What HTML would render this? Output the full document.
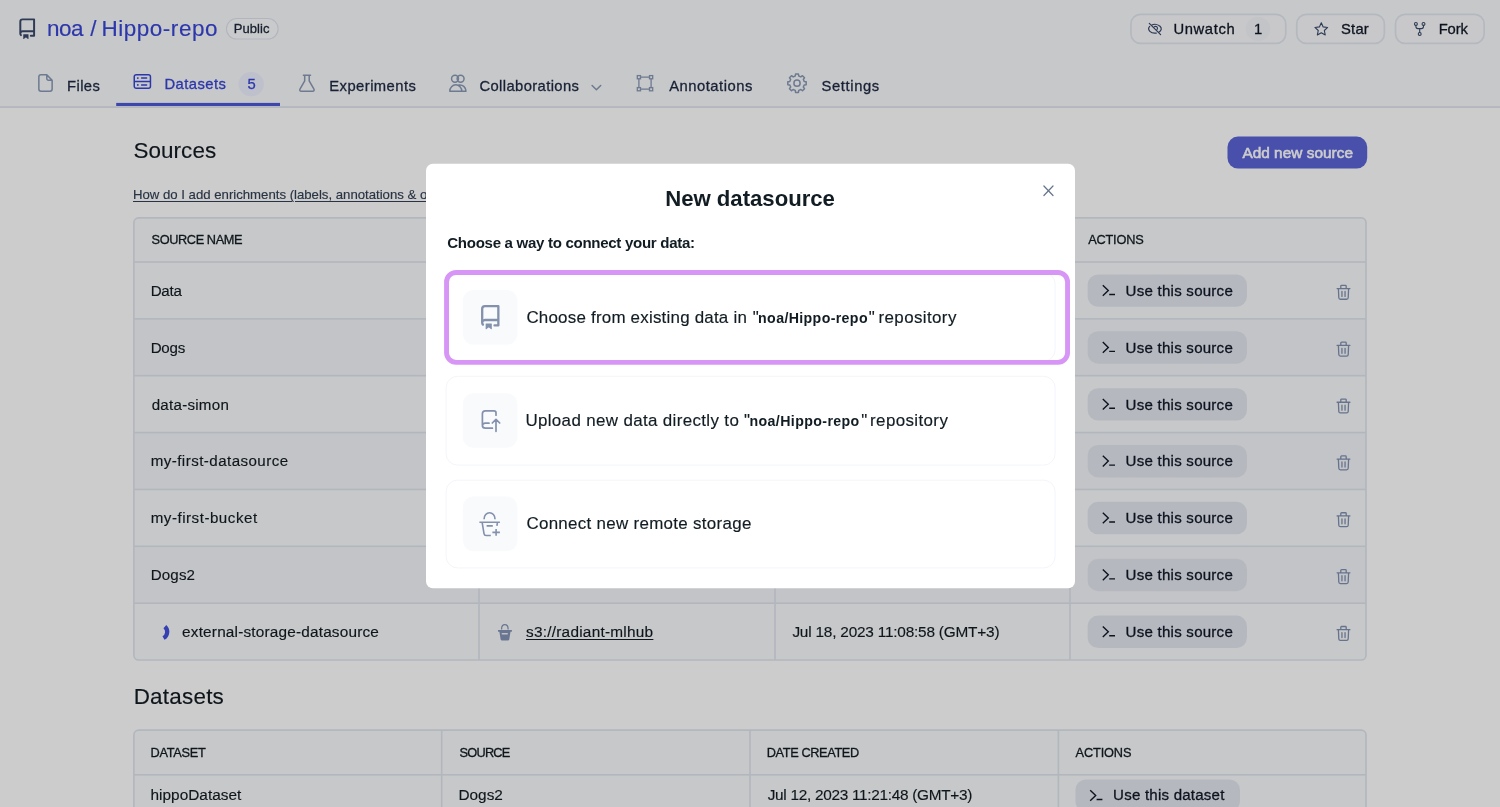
<!DOCTYPE html>
<html lang="en"><head><meta charset="utf-8"><title>noa/Hippo-repo - Datasets</title>
<style>
html,body{margin:0;padding:0;}
body{width:1500px;height:807px;overflow:hidden;position:relative;background:#fff;font-family:"Liberation Sans", sans-serif;}
.t{position:absolute;white-space:pre;font-family:"Liberation Sans", sans-serif;}
.a{position:absolute;box-sizing:border-box;}
svg{position:absolute;overflow:visible;}
</style></head><body>
<div class="a" id="page" style="left:0;top:0;width:1500px;height:807px;overflow:hidden;will-change:transform;">
<svg width="1500" height="807" viewBox="0 0 1500 807" style="left:0;top:0"><rect x="0.00" y="0.00" width="1500.00" height="106.40" rx="0.00" fill="#f8fafc" />
<rect x="0.00" y="106.20" width="1500.00" height="1.70" rx="0.00" fill="#dfe5ed" />
<rect x="116.20" y="102.90" width="163.80" height="3.10" rx="0.00" fill="#4e5ad7" />
<rect x="238.60" y="71.90" width="25.30" height="24.40" rx="12.50" fill="#eef1ff" />
<rect x="226.45" y="18.55" width="51.70" height="20.50" rx="10.25" fill="#fcfdfe" stroke="#dfe4ec" stroke-width="1.1" />
<rect x="1130.95" y="14.35" width="154.80" height="29.10" rx="9.65" fill="#fafbfd" stroke="#e2e7ef" stroke-width="1.7" />
<rect x="1296.75" y="14.35" width="87.60" height="29.10" rx="9.65" fill="#fafbfd" stroke="#e2e7ef" stroke-width="1.7" />
<rect x="1395.55" y="14.35" width="88.60" height="29.10" rx="9.65" fill="#fafbfd" stroke="#e2e7ef" stroke-width="1.7" />
<rect x="1245.60" y="16.80" width="24.80" height="24.20" rx="12.40" fill="#f4f6f9" />
<rect x="1227.50" y="136.60" width="139.70" height="32.00" rx="10.50" fill="#5a64d8" />
<clipPath id="c1"><rect x="133.9" y="217.85" width="1232.1" height="442.15" rx="4.7"/></clipPath>
<g clip-path="url(#c1)"><rect x="133.90" y="217.85" width="1232.10" height="44.15" rx="0.00" fill="#f8fafc" /><rect x="133.90" y="262.00" width="1232.10" height="57.16" rx="0.00" fill="#f8fafc" /><rect x="133.90" y="318.86" width="1232.10" height="57.16" rx="0.00" fill="#f4f5fa" /><rect x="133.90" y="375.72" width="1232.10" height="57.16" rx="0.00" fill="#f8fafc" /><rect x="133.90" y="432.58" width="1232.10" height="57.16" rx="0.00" fill="#f4f5fa" /><rect x="133.90" y="489.44" width="1232.10" height="57.16" rx="0.00" fill="#f8fafc" /><rect x="133.90" y="546.30" width="1232.10" height="57.16" rx="0.00" fill="#f4f5fa" /><rect x="133.90" y="603.16" width="1232.10" height="57.16" rx="0.00" fill="#f8fafc" /><rect x="133.90" y="261.20" width="1232.10" height="1.60" rx="0.00" fill="#dfe5ed" /><rect x="133.90" y="318.06" width="1232.10" height="1.60" rx="0.00" fill="#dfe5ed" /><rect x="133.90" y="374.92" width="1232.10" height="1.60" rx="0.00" fill="#dfe5ed" /><rect x="133.90" y="431.78" width="1232.10" height="1.60" rx="0.00" fill="#dfe5ed" /><rect x="133.90" y="488.64" width="1232.10" height="1.60" rx="0.00" fill="#dfe5ed" /><rect x="133.90" y="545.50" width="1232.10" height="1.60" rx="0.00" fill="#dfe5ed" /><rect x="133.90" y="602.36" width="1232.10" height="1.60" rx="0.00" fill="#dfe5ed" /><rect x="478.20" y="217.85" width="1.60" height="442.15" rx="0.00" fill="#dfe5ed" /><rect x="774.20" y="217.85" width="1.60" height="442.15" rx="0.00" fill="#dfe5ed" /><rect x="1069.20" y="217.85" width="1.60" height="442.15" rx="0.00" fill="#dfe5ed" /></g>
<rect x="133.90" y="217.85" width="1232.10" height="442.15" rx="4.70" fill="none" stroke="#dfe5ed" stroke-width="1.6" />
<rect x="1087.60" y="274.43" width="159.40" height="32.40" rx="10.50" fill="#e3e8ef" />
<rect x="1087.60" y="331.29" width="159.40" height="32.40" rx="10.50" fill="#e3e8ef" />
<rect x="1087.60" y="388.15" width="159.40" height="32.40" rx="10.50" fill="#e3e8ef" />
<rect x="1087.60" y="445.01" width="159.40" height="32.40" rx="10.50" fill="#e3e8ef" />
<rect x="1087.60" y="501.87" width="159.40" height="32.40" rx="10.50" fill="#e3e8ef" />
<rect x="1087.60" y="558.73" width="159.40" height="32.40" rx="10.50" fill="#e3e8ef" />
<rect x="1087.60" y="615.59" width="159.40" height="32.40" rx="10.50" fill="#e3e8ef" />
<clipPath id="c2"><rect x="133.9" y="730.1" width="1232.1" height="169.89999999999998" rx="4.7"/></clipPath>
<g clip-path="url(#c2)"><rect x="133.90" y="730.10" width="1232.10" height="169.90" rx="0.00" fill="#f8fafc" /><rect x="133.90" y="774.00" width="1232.10" height="1.60" rx="0.00" fill="#dfe5ed" /><rect x="440.90" y="730.10" width="1.60" height="169.90" rx="0.00" fill="#dfe5ed" /><rect x="749.20" y="730.10" width="1.60" height="169.90" rx="0.00" fill="#dfe5ed" /><rect x="1057.60" y="730.10" width="1.60" height="169.90" rx="0.00" fill="#dfe5ed" /></g>
<rect x="133.90" y="730.10" width="1232.10" height="169.90" rx="4.70" fill="none" stroke="#dfe5ed" stroke-width="1.6" />
<rect x="1075.40" y="779.40" width="164.60" height="32.40" rx="10.50" fill="#e3e8ef" />
<path transform="translate(16.7,18.4) scale(1.3125)" d="M2 2.5A2.5 2.5 0 0 1 4.5 0h8.75a.75.75 0 0 1 .75.75v12.5a.75.75 0 0 1-.75.75h-2.5a.75.75 0 0 1 0-1.5h1.75v-2h-8a1 1 0 0 0-.714 1.7.75.75 0 1 1-1.072 1.05A2.495 2.495 0 0 1 2 11.5Zm10.5-1h-8a1 1 0 0 0-1 1v6.708A2.486 2.486 0 0 1 4.5 9h8ZM5 12.25a.25.25 0 0 1 .25-.25h3.5a.25.25 0 0 1 .25.25v3.25a.25.25 0 0 1-.4.2l-1.45-1.087a.249.249 0 0 0-.3 0L5.4 15.7a.25.25 0 0 1-.4-.2Z" fill="#3a4a6b"/>
<path d="M41,74.85 H46.8 L52.15,80.2 V89.1 a2.15,2.15 0 0 1 -2.15,2.15 H41 a2.15,2.15 0 0 1 -2.15,-2.15 V77 a2.15,2.15 0 0 1 2.15,-2.15 Z M46.8,74.85 V78.6 a1.6,1.6 0 0 0 1.6,1.6 H52.15" fill="none" stroke="#8a99b5" stroke-width="1.5" stroke-linecap="round" stroke-linejoin="round" />
<path d="M136.2,74.75 H148.5 a1.95,1.95 0 0 1 1.95,1.95 V86.3 a1.95,1.95 0 0 1 -1.95,1.95 H136.2 a1.95,1.95 0 0 1 -1.95,-1.95 V76.7 a1.95,1.95 0 0 1 1.95,-1.95 Z M134.25,81.5 H150.45 M141.6,78.1 H146.6 M141.6,84.9 H146.6" fill="none" stroke="#3845d6" stroke-width="1.5" stroke-linecap="round" stroke-linejoin="round" />
<circle cx="137.8" cy="78.1" r="0.95" fill="#3845d6"/><circle cx="137.8" cy="84.9" r="0.95" fill="#3845d6"/>
<path d="M303.4,75.25 H310.5 M304.7,75.25 V80.9 L299.95,89.2 a1.35,1.35 0 0 0 1.15,2.05 H312.8 a1.35,1.35 0 0 0 1.15,-2.05 L309.2,80.9 V75.25" fill="none" stroke="#8a99b5" stroke-width="1.5" stroke-linecap="round" stroke-linejoin="round" />
<circle cx="455.0" cy="78.8" r="3.45" fill="none" stroke="#8a99b5" stroke-width="1.5"/><circle cx="460.6" cy="78.8" r="3.45" fill="none" stroke="#8a99b5" stroke-width="1.5"/>
<path d="M449.8,91.2 a6.0,6.4 0 0 1 12.0,0 Z M458.9,85.0 a6.0,6.4 0 0 1 7.1,6.2 H461.8" fill="none" stroke="#8a99b5" stroke-width="1.5" stroke-linecap="round" stroke-linejoin="round" />
<path d="M592.1,85.5 L596.4,89.8 L600.7,85.5" fill="none" stroke="#8a99b5" stroke-width="1.5" stroke-linecap="round" stroke-linejoin="round" />
<rect x="637.3" y="75.6" width="3.2" height="3.2" fill="none" stroke="#8a99b5" stroke-width="1.3"/>
<rect x="649.5" y="75.6" width="3.2" height="3.2" fill="none" stroke="#8a99b5" stroke-width="1.3"/>
<rect x="637.3" y="87.6" width="3.2" height="3.2" fill="none" stroke="#8a99b5" stroke-width="1.3"/>
<rect x="649.5" y="87.6" width="3.2" height="3.2" fill="none" stroke="#8a99b5" stroke-width="1.3"/>
<path d="M640.5,77.2 H649.5 M640.5,89.2 H649.5 M638.9,78.8 V87.6 M651.1,78.8 V87.6" fill="none" stroke="#8a99b5" stroke-width="1.3" stroke-linecap="round" stroke-linejoin="round" />
<path d="M795.27,76.00 L795.55,74.01 L798.45,74.01 L798.73,76.00 L800.87,76.89 L802.47,75.68 L804.52,77.73 L803.31,79.33 L804.20,81.47 L806.19,81.75 L806.19,84.65 L804.20,84.93 L803.31,87.07 L804.52,88.67 L802.47,90.72 L800.87,89.51 L798.73,90.40 L798.45,92.39 L795.55,92.39 L795.27,90.40 L793.13,89.51 L791.53,90.72 L789.48,88.67 L790.69,87.07 L789.80,84.93 L787.81,84.65 L787.81,81.75 L789.80,81.47 L790.69,79.33 L789.48,77.73 L791.53,75.68 L793.13,76.89 Z" fill="none" stroke="#8a99b5" stroke-width="1.5" stroke-linecap="round" stroke-linejoin="round" />
<circle cx="797" cy="83.2" r="3.1" fill="none" stroke="#8a99b5" stroke-width="1.5"/>
<path d="M1151.39,25.20 A6.3,4.4 0 0 1 1158.88,32.27 M1156.31,33.10 A6.3,4.4 0 0 1 1149.66,26.47 M1149.3,23.3 L1160.6,34.6" fill="none" stroke="#3a4a6b" stroke-width="1.2" stroke-linecap="round" stroke-linejoin="round" />
<path d="M1154.2,26.9 A1.8,1.8 0 0 1 1156.9,29.6" fill="none" stroke="#3a4a6b" stroke-width="1.1" stroke-linecap="round" stroke-linejoin="round" />
<path d="M1321.30,22.80 L1323.18,26.91 L1327.67,27.43 L1324.34,30.49 L1325.24,34.92 L1321.30,32.70 L1317.36,34.92 L1318.26,30.49 L1314.93,27.43 L1319.42,26.91 Z" fill="none" stroke="#3a4a6b" stroke-width="1.1" stroke-linecap="round" stroke-linejoin="round" />
<circle cx="1415.9" cy="23.9" r="1.45" fill="none" stroke="#3a4a6b" stroke-width="1.1"/>
<circle cx="1423.5" cy="23.9" r="1.45" fill="none" stroke="#3a4a6b" stroke-width="1.1"/>
<circle cx="1419.7" cy="33.9" r="1.45" fill="none" stroke="#3a4a6b" stroke-width="1.1"/>
<path d="M1415.9,25.4 V26.6 a2,2 0 0 0 2,2 H1421.5 a2,2 0 0 0 2,-2 V25.4 M1419.7,28.6 V32.4" fill="none" stroke="#3a4a6b" stroke-width="1.1" stroke-linecap="round" stroke-linejoin="round" />
<path d="M1102.80,285.23 L1108.30,290.53 L1102.80,295.83 M1109.20,294.53 H1115.00" fill="none" stroke="#111827" stroke-width="1.4" stroke-linecap="round" stroke-linejoin="round" style="stroke-linecap:butt;stroke-linejoin:miter"/>
<path d="M1337.10,288.53 H1349.90 M1340.80,288.53 V286.13 a0.8,0.8 0 0 1 0.8,-0.8 H1345.40 a0.8,0.8 0 0 1 0.8,0.8 V288.53 M1338.40,288.53 L1338.80,297.73 a1.6,1.6 0 0 0 1.6,1.5 H1346.60 a1.6,1.6 0 0 0 1.6,-1.5 L1348.60,288.53 M1341.95,291.43 V296.43 M1345.05,291.43 V296.43" fill="none" stroke="#8090b0" stroke-width="1.3" stroke-linecap="round" stroke-linejoin="round" />
<path d="M1102.80,342.09 L1108.30,347.39 L1102.80,352.69 M1109.20,351.39 H1115.00" fill="none" stroke="#111827" stroke-width="1.4" stroke-linecap="round" stroke-linejoin="round" style="stroke-linecap:butt;stroke-linejoin:miter"/>
<path d="M1337.10,345.39 H1349.90 M1340.80,345.39 V342.99 a0.8,0.8 0 0 1 0.8,-0.8 H1345.40 a0.8,0.8 0 0 1 0.8,0.8 V345.39 M1338.40,345.39 L1338.80,354.59 a1.6,1.6 0 0 0 1.6,1.5 H1346.60 a1.6,1.6 0 0 0 1.6,-1.5 L1348.60,345.39 M1341.95,348.29 V353.29 M1345.05,348.29 V353.29" fill="none" stroke="#8090b0" stroke-width="1.3" stroke-linecap="round" stroke-linejoin="round" />
<path d="M1102.80,398.95 L1108.30,404.25 L1102.80,409.55 M1109.20,408.25 H1115.00" fill="none" stroke="#111827" stroke-width="1.4" stroke-linecap="round" stroke-linejoin="round" style="stroke-linecap:butt;stroke-linejoin:miter"/>
<path d="M1337.10,402.25 H1349.90 M1340.80,402.25 V399.85 a0.8,0.8 0 0 1 0.8,-0.8 H1345.40 a0.8,0.8 0 0 1 0.8,0.8 V402.25 M1338.40,402.25 L1338.80,411.45 a1.6,1.6 0 0 0 1.6,1.5 H1346.60 a1.6,1.6 0 0 0 1.6,-1.5 L1348.60,402.25 M1341.95,405.15 V410.15 M1345.05,405.15 V410.15" fill="none" stroke="#8090b0" stroke-width="1.3" stroke-linecap="round" stroke-linejoin="round" />
<path d="M1102.80,455.81 L1108.30,461.11 L1102.80,466.41 M1109.20,465.11 H1115.00" fill="none" stroke="#111827" stroke-width="1.4" stroke-linecap="round" stroke-linejoin="round" style="stroke-linecap:butt;stroke-linejoin:miter"/>
<path d="M1337.10,459.11 H1349.90 M1340.80,459.11 V456.71 a0.8,0.8 0 0 1 0.8,-0.8 H1345.40 a0.8,0.8 0 0 1 0.8,0.8 V459.11 M1338.40,459.11 L1338.80,468.31 a1.6,1.6 0 0 0 1.6,1.5 H1346.60 a1.6,1.6 0 0 0 1.6,-1.5 L1348.60,459.11 M1341.95,462.01 V467.01 M1345.05,462.01 V467.01" fill="none" stroke="#8090b0" stroke-width="1.3" stroke-linecap="round" stroke-linejoin="round" />
<path d="M1102.80,512.67 L1108.30,517.97 L1102.80,523.27 M1109.20,521.97 H1115.00" fill="none" stroke="#111827" stroke-width="1.4" stroke-linecap="round" stroke-linejoin="round" style="stroke-linecap:butt;stroke-linejoin:miter"/>
<path d="M1337.10,515.97 H1349.90 M1340.80,515.97 V513.57 a0.8,0.8 0 0 1 0.8,-0.8 H1345.40 a0.8,0.8 0 0 1 0.8,0.8 V515.97 M1338.40,515.97 L1338.80,525.17 a1.6,1.6 0 0 0 1.6,1.5 H1346.60 a1.6,1.6 0 0 0 1.6,-1.5 L1348.60,515.97 M1341.95,518.87 V523.87 M1345.05,518.87 V523.87" fill="none" stroke="#8090b0" stroke-width="1.3" stroke-linecap="round" stroke-linejoin="round" />
<path d="M1102.80,569.53 L1108.30,574.83 L1102.80,580.13 M1109.20,578.83 H1115.00" fill="none" stroke="#111827" stroke-width="1.4" stroke-linecap="round" stroke-linejoin="round" style="stroke-linecap:butt;stroke-linejoin:miter"/>
<path d="M1337.10,572.83 H1349.90 M1340.80,572.83 V570.43 a0.8,0.8 0 0 1 0.8,-0.8 H1345.40 a0.8,0.8 0 0 1 0.8,0.8 V572.83 M1338.40,572.83 L1338.80,582.03 a1.6,1.6 0 0 0 1.6,1.5 H1346.60 a1.6,1.6 0 0 0 1.6,-1.5 L1348.60,572.83 M1341.95,575.73 V580.73 M1345.05,575.73 V580.73" fill="none" stroke="#8090b0" stroke-width="1.3" stroke-linecap="round" stroke-linejoin="round" />
<path d="M1102.80,626.39 L1108.30,631.69 L1102.80,636.99 M1109.20,635.69 H1115.00" fill="none" stroke="#111827" stroke-width="1.4" stroke-linecap="round" stroke-linejoin="round" style="stroke-linecap:butt;stroke-linejoin:miter"/>
<path d="M1337.10,629.69 H1349.90 M1340.80,629.69 V627.29 a0.8,0.8 0 0 1 0.8,-0.8 H1345.40 a0.8,0.8 0 0 1 0.8,0.8 V629.69 M1338.40,629.69 L1338.80,638.89 a1.6,1.6 0 0 0 1.6,1.5 H1346.60 a1.6,1.6 0 0 0 1.6,-1.5 L1348.60,629.69 M1341.95,632.59 V637.59 M1345.05,632.59 V637.59" fill="none" stroke="#8090b0" stroke-width="1.3" stroke-linecap="round" stroke-linejoin="round" />
<path d="M1090.20,790.20 L1095.70,795.50 L1090.20,800.80 M1096.60,799.50 H1102.40" fill="none" stroke="#111827" stroke-width="1.4" stroke-linecap="round" stroke-linejoin="round" style="stroke-linecap:butt;stroke-linejoin:miter"/>
<path d="M501.6,628.9 C501.6,623.1 508.1,623.1 508.1,628.9" fill="none" stroke="#8594b6" stroke-width="1.25" stroke-linecap="round" stroke-linejoin="round" />
<path d="M498,630 H511.9 V631.2 a0.5,0.5 0 0 1 -0.5,0.5 H510.5 L509.3,639.3 a1.5,1.5 0 0 1 -1.5,1.3 H502.1 a1.5,1.5 0 0 1 -1.5,-1.3 L499.4,631.7 H498.5 a0.5,0.5 0 0 1 -0.5,-0.5 Z" fill="#8594b6"/>
<rect x="501.7" y="633.0" width="6.1" height="1.4" rx="0.3" fill="#eef1f6"/>
<path d="M164.88,626.60 A7.0,7.0 0 0 1 163.49,637.98" fill="none" stroke="#4350e0" stroke-width="4.2"/></svg>
<span class="t" style="left:47.00px;top:18.00px;font-size:22.46px;line-height:22.46px;font-weight:400;color:#3845d6;letter-spacing:-0.487px;-webkit-text-stroke:0.15px #3845d6;">noa</span>
<span class="t" style="left:90.20px;top:18.00px;font-size:22.46px;line-height:22.46px;font-weight:400;color:#3845d6;letter-spacing:0.000px;-webkit-text-stroke:0.15px #3845d6;">/</span>
<span class="t" style="left:101.40px;top:18.00px;font-size:22.46px;line-height:22.46px;font-weight:400;color:#3845d6;letter-spacing:0.556px;-webkit-text-stroke:0.15px #3845d6;">Hippo-repo</span>
<span class="t" style="left:233.70px;top:22.00px;font-size:13.04px;line-height:13.04px;font-weight:400;color:#1e293b;letter-spacing:0.045px;-webkit-text-stroke:0.3px #1e293b;">Public</span>
<span class="t" style="left:67.00px;top:79.00px;font-size:14.78px;line-height:14.78px;font-weight:400;color:#1f2a44;letter-spacing:0.427px;-webkit-text-stroke:0.3px #1f2a44;">Files</span>
<span class="t" style="left:164.50px;top:77.00px;font-size:14.78px;line-height:14.78px;font-weight:400;color:#3845d6;letter-spacing:0.459px;-webkit-text-stroke:0.3px #3845d6;">Datasets</span>
<span class="t" style="left:247.60px;top:77.00px;font-size:14.78px;line-height:14.78px;font-weight:400;color:#3845d6;letter-spacing:0.000px;-webkit-text-stroke:0.3px #3845d6;">5</span>
<span class="t" style="left:329.30px;top:79.00px;font-size:14.78px;line-height:14.78px;font-weight:400;color:#1f2a44;letter-spacing:0.452px;-webkit-text-stroke:0.3px #1f2a44;">Experiments</span>
<span class="t" style="left:479.40px;top:79.00px;font-size:14.78px;line-height:14.78px;font-weight:400;color:#1f2a44;letter-spacing:0.399px;-webkit-text-stroke:0.3px #1f2a44;">Collaborations</span>
<span class="t" style="left:669.20px;top:79.00px;font-size:14.78px;line-height:14.78px;font-weight:400;color:#1f2a44;letter-spacing:0.509px;-webkit-text-stroke:0.3px #1f2a44;">Annotations</span>
<span class="t" style="left:821.60px;top:79.00px;font-size:14.78px;line-height:14.78px;font-weight:400;color:#1f2a44;letter-spacing:0.604px;-webkit-text-stroke:0.3px #1f2a44;">Settings</span>
<span class="t" style="left:1173.40px;top:22.00px;font-size:14.78px;line-height:14.78px;font-weight:400;color:#111827;letter-spacing:0.644px;-webkit-text-stroke:0.3px #111827;">Unwatch</span>
<span class="t" style="left:1254.00px;top:22.00px;font-size:14.78px;line-height:14.78px;font-weight:400;color:#111827;letter-spacing:0.000px;-webkit-text-stroke:0.3px #111827;">1</span>
<span class="t" style="left:1341.10px;top:22.00px;font-size:14.78px;line-height:14.78px;font-weight:400;color:#111827;letter-spacing:0.179px;-webkit-text-stroke:0.3px #111827;">Star</span>
<span class="t" style="left:1438.70px;top:22.00px;font-size:14.78px;line-height:14.78px;font-weight:400;color:#111827;letter-spacing:-0.083px;-webkit-text-stroke:0.3px #111827;">Fork</span>
<span class="t" style="left:133.40px;top:140.00px;font-size:22.46px;line-height:22.46px;font-weight:400;color:#131c22;letter-spacing:0.076px;-webkit-text-stroke:0.15px #131c22;">Sources</span>
<span class="t" style="left:133.00px;top:188.00px;font-size:13.19px;line-height:13.19px;font-weight:400;color:#334155;letter-spacing:-0.009px;text-decoration:underline;text-underline-offset:1.5px;text-decoration-thickness:1px;-webkit-text-stroke:0.15px #334155;">How do I add enrichments (labels, annotations &amp; other metadata) to my data?</span>
<span class="t" style="left:1242.40px;top:145.00px;font-size:15.36px;line-height:15.36px;font-weight:400;color:#ffffff;letter-spacing:0.031px;-webkit-text-stroke:0.6px #ffffff;">Add new source</span>
<span class="t" style="left:151.60px;top:234.00px;font-size:12.75px;line-height:12.75px;font-weight:400;color:#131c22;letter-spacing:-0.402px;-webkit-text-stroke:0.3px #131c22;">SOURCE NAME</span>
<span class="t" style="left:1088.20px;top:234.00px;font-size:12.75px;line-height:12.75px;font-weight:400;color:#131c22;letter-spacing:-0.195px;-webkit-text-stroke:0.3px #131c22;">ACTIONS</span>
<span class="t" style="left:150.70px;top:283.00px;font-size:15.14px;line-height:15.14px;font-weight:400;color:#131c22;letter-spacing:-0.246px;-webkit-text-stroke:0.15px #131c22;">Data</span>
<span class="t" style="left:150.70px;top:340.00px;font-size:15.14px;line-height:15.14px;font-weight:400;color:#131c22;letter-spacing:-0.249px;-webkit-text-stroke:0.15px #131c22;">Dogs</span>
<span class="t" style="left:151.70px;top:397.00px;font-size:15.14px;line-height:15.14px;font-weight:400;color:#131c22;letter-spacing:0.255px;-webkit-text-stroke:0.15px #131c22;">data-simon</span>
<span class="t" style="left:150.70px;top:453.00px;font-size:15.14px;line-height:15.14px;font-weight:400;color:#131c22;letter-spacing:0.443px;-webkit-text-stroke:0.15px #131c22;">my-first-datasource</span>
<span class="t" style="left:150.70px;top:510.00px;font-size:15.14px;line-height:15.14px;font-weight:400;color:#131c22;letter-spacing:0.517px;-webkit-text-stroke:0.15px #131c22;">my-first-bucket</span>
<span class="t" style="left:150.70px;top:567.00px;font-size:15.14px;line-height:15.14px;font-weight:400;color:#131c22;letter-spacing:0.148px;-webkit-text-stroke:0.15px #131c22;">Dogs2</span>
<span class="t" style="left:182.10px;top:624.00px;font-size:15.36px;line-height:15.36px;font-weight:400;color:#131c22;letter-spacing:0.179px;-webkit-text-stroke:0.15px #131c22;">external-storage-datasource</span>
<span class="t" style="left:526.00px;top:624.00px;font-size:15.36px;line-height:15.36px;font-weight:400;color:#131c22;letter-spacing:0.247px;text-decoration:underline;text-underline-offset:1.5px;text-decoration-thickness:1px;-webkit-text-stroke:0.15px #131c22;">s3://radiant-mlhub</span>
<span class="t" style="left:792.40px;top:624.00px;font-size:15.36px;line-height:15.36px;font-weight:400;color:#131c22;letter-spacing:-0.201px;-webkit-text-stroke:0.15px #131c22;">Jul 18, 2023 11:08:58 (GMT+3)</span>
<span class="t" style="left:1125.60px;top:283.00px;font-size:15.07px;line-height:15.07px;font-weight:400;color:#111827;letter-spacing:0.241px;-webkit-text-stroke:0.3px #111827;">Use this source</span>
<span class="t" style="left:1125.60px;top:340.00px;font-size:15.07px;line-height:15.07px;font-weight:400;color:#111827;letter-spacing:0.241px;-webkit-text-stroke:0.3px #111827;">Use this source</span>
<span class="t" style="left:1125.60px;top:397.00px;font-size:15.07px;line-height:15.07px;font-weight:400;color:#111827;letter-spacing:0.241px;-webkit-text-stroke:0.3px #111827;">Use this source</span>
<span class="t" style="left:1125.60px;top:453.00px;font-size:15.07px;line-height:15.07px;font-weight:400;color:#111827;letter-spacing:0.241px;-webkit-text-stroke:0.3px #111827;">Use this source</span>
<span class="t" style="left:1125.60px;top:510.00px;font-size:15.07px;line-height:15.07px;font-weight:400;color:#111827;letter-spacing:0.241px;-webkit-text-stroke:0.3px #111827;">Use this source</span>
<span class="t" style="left:1125.60px;top:567.00px;font-size:15.07px;line-height:15.07px;font-weight:400;color:#111827;letter-spacing:0.241px;-webkit-text-stroke:0.3px #111827;">Use this source</span>
<span class="t" style="left:1125.60px;top:624.00px;font-size:15.07px;line-height:15.07px;font-weight:400;color:#111827;letter-spacing:0.241px;-webkit-text-stroke:0.3px #111827;">Use this source</span>
<span class="t" style="left:133.70px;top:686.00px;font-size:22.46px;line-height:22.46px;font-weight:400;color:#131c22;letter-spacing:0.217px;-webkit-text-stroke:0.15px #131c22;">Datasets</span>
<span class="t" style="left:150.50px;top:747.00px;font-size:12.75px;line-height:12.75px;font-weight:400;color:#131c22;letter-spacing:-0.253px;-webkit-text-stroke:0.3px #131c22;">DATASET</span>
<span class="t" style="left:459.50px;top:747.00px;font-size:12.75px;line-height:12.75px;font-weight:400;color:#131c22;letter-spacing:-0.749px;-webkit-text-stroke:0.3px #131c22;">SOURCE</span>
<span class="t" style="left:766.70px;top:747.00px;font-size:12.75px;line-height:12.75px;font-weight:400;color:#131c22;letter-spacing:-0.370px;-webkit-text-stroke:0.3px #131c22;">DATE CREATED</span>
<span class="t" style="left:1075.60px;top:747.00px;font-size:12.75px;line-height:12.75px;font-weight:400;color:#131c22;letter-spacing:-0.145px;-webkit-text-stroke:0.3px #131c22;">ACTIONS</span>
<span class="t" style="left:150.50px;top:787.00px;font-size:15.36px;line-height:15.36px;font-weight:400;color:#131c22;letter-spacing:0.023px;-webkit-text-stroke:0.15px #131c22;">hippoDataset</span>
<span class="t" style="left:458.50px;top:787.00px;font-size:15.36px;line-height:15.36px;font-weight:400;color:#131c22;letter-spacing:-0.014px;-webkit-text-stroke:0.15px #131c22;">Dogs2</span>
<span class="t" style="left:767.70px;top:787.00px;font-size:15.36px;line-height:15.36px;font-weight:400;color:#131c22;letter-spacing:-0.286px;-webkit-text-stroke:0.15px #131c22;">Jul 12, 2023 11:21:48 (GMT+3)</span>
<span class="t" style="left:1113.10px;top:787.00px;font-size:15.07px;line-height:15.07px;font-weight:400;color:#111827;letter-spacing:0.219px;-webkit-text-stroke:0.3px #111827;">Use this dataset</span>
</div>
<div class="a" id="overlay" style="left:0;top:0;width:1500px;height:807px;background:rgba(0,0,0,0.2);"></div>
<div class="a" id="modal" style="left:0;top:0;width:1500px;height:807px;will-change:transform;">
<svg width="1500" height="807" viewBox="0 0 1500 807" style="left:0;top:0"><rect x="426.00" y="163.80" width="649.00" height="424.40" rx="7.00" fill="#fff" />
<rect x="446.10" y="272.40" width="609.00" height="88.80" rx="11.50" fill="none" stroke="#f3f5fa" stroke-width="1" />
<rect x="446.10" y="376.30" width="609.00" height="88.80" rx="11.50" fill="none" stroke="#f3f5fa" stroke-width="1" />
<rect x="446.10" y="480.20" width="609.00" height="87.70" rx="11.50" fill="none" stroke="#f3f5fa" stroke-width="1" />
<rect x="446.55" y="272.45" width="621.00" height="89.90" rx="9.55" fill="none" stroke="#d796f5" stroke-width="4.9" />
<rect x="462.80" y="290.00" width="54.60" height="54.60" rx="11.00" fill="#f8fafc" />
<rect x="462.80" y="393.20" width="54.60" height="54.60" rx="11.00" fill="#f8fafc" />
<rect x="462.80" y="496.60" width="54.60" height="54.60" rx="11.00" fill="#f8fafc" />
<path d="M1043.9,186 L1053,195.5 M1053,186 L1043.9,195.5" fill="none" stroke="#64748b" stroke-width="1.2" stroke-linecap="round" stroke-linejoin="round" />
<path transform="translate(477.95,305) scale(1.54)" d="M2 2.5A2.5 2.5 0 0 1 4.5 0h8.75a.75.75 0 0 1 .75.75v12.5a.75.75 0 0 1-.75.75h-2.5a.75.75 0 0 1 0-1.5h1.75v-2h-8a1 1 0 0 0-.714 1.7.75.75 0 1 1-1.072 1.05A2.495 2.495 0 0 1 2 11.5Zm10.5-1h-8a1 1 0 0 0-1 1v6.708A2.486 2.486 0 0 1 4.5 9h8ZM5 12.25a.25.25 0 0 1 .25-.25h3.5a.25.25 0 0 1 .25.25v3.25a.25.25 0 0 1-.4.2l-1.45-1.087a.249.249 0 0 0-.3 0L5.4 15.7a.25.25 0 0 1-.4-.2Z" fill="#8391ad"/>
<path d="M496,415.2 V412.8 a2,2 0 0 0 -2,-2 H485.4 a3,3 0 0 0 -3,3 V425.2 a3,3 0 0 0 3,3 H492.4 M482.4,426 a2.8,2.8 0 0 1 2.8,-2.8 H489 M496,431.3 V419.3 M492.3,423 L496,419.3 L499.7,423" fill="none" stroke="#8391ad" stroke-width="1.7" stroke-linecap="round" stroke-linejoin="round" />
<path d="M484.1,519.3 V518.9 A5.45,6.2 0 0 1 495,518.9 V519.3 M479.4,522.2 H499.9 M482.1,522.2 L484.0,533.6 a2.2,2.2 0 0 0 2.2,1.9 H490.8 M497.5,522.2 L496.9,525.8 M486.6,525.9 H492.8 M492.4,532.4 H499.9 M496.1,529.0 V535.8" fill="none" stroke="#8391ad" stroke-width="1.6" stroke-linecap="round" stroke-linejoin="round" style="stroke-linecap:butt"/></svg>
<span class="t" style="left:665.20px;top:188.00px;font-size:22.17px;line-height:22.17px;font-weight:700;color:#111c23;letter-spacing:-0.016px;">New datasource</span>
<span class="t" style="left:447.30px;top:235.00px;font-size:15.07px;line-height:15.07px;font-weight:700;color:#111c23;letter-spacing:-0.305px;">Choose a way to connect your data:</span>
<span class="t" style="left:526.40px;top:310.00px;font-size:16.96px;line-height:16.96px;font-weight:400;color:#111c23;letter-spacing:0.214px;-webkit-text-stroke:0.15px #111c23;">Choose from existing data in</span>
<span class="t" style="left:752.80px;top:310.00px;font-size:16.96px;line-height:16.96px;font-weight:400;color:#111c23;letter-spacing:0.000px;-webkit-text-stroke:0.15px #111c23;">&quot;</span>
<span class="t" style="left:758.10px;top:311.00px;font-size:14.2px;line-height:14.2px;font-weight:700;color:#111c23;letter-spacing:0.357px;">noa/Hippo-repo</span>
<span class="t" style="left:868.80px;top:310.00px;font-size:16.96px;line-height:16.96px;font-weight:400;color:#111c23;letter-spacing:0.000px;-webkit-text-stroke:0.15px #111c23;">&quot;</span>
<span class="t" style="left:878.50px;top:310.00px;font-size:16.96px;line-height:16.96px;font-weight:400;color:#111c23;letter-spacing:0.389px;-webkit-text-stroke:0.15px #111c23;">repository</span>
<span class="t" style="left:525.40px;top:413.00px;font-size:16.96px;line-height:16.96px;font-weight:400;color:#111c23;letter-spacing:0.350px;-webkit-text-stroke:0.15px #111c23;">Upload new data directly to</span>
<span class="t" style="left:744.10px;top:413.00px;font-size:16.96px;line-height:16.96px;font-weight:400;color:#111c23;letter-spacing:0.000px;-webkit-text-stroke:0.15px #111c23;">&quot;</span>
<span class="t" style="left:749.50px;top:414.00px;font-size:14.2px;line-height:14.2px;font-weight:700;color:#111c23;letter-spacing:0.380px;">noa/Hippo-repo</span>
<span class="t" style="left:861.20px;top:413.00px;font-size:16.96px;line-height:16.96px;font-weight:400;color:#111c23;letter-spacing:0.000px;-webkit-text-stroke:0.15px #111c23;">&quot;</span>
<span class="t" style="left:870.10px;top:413.00px;font-size:16.96px;line-height:16.96px;font-weight:400;color:#111c23;letter-spacing:0.378px;-webkit-text-stroke:0.15px #111c23;">repository</span>
<span class="t" style="left:526.40px;top:516.00px;font-size:16.96px;line-height:16.96px;font-weight:400;color:#111c23;letter-spacing:0.297px;-webkit-text-stroke:0.15px #111c23;">Connect new remote storage</span>
</div>
</body></html>
